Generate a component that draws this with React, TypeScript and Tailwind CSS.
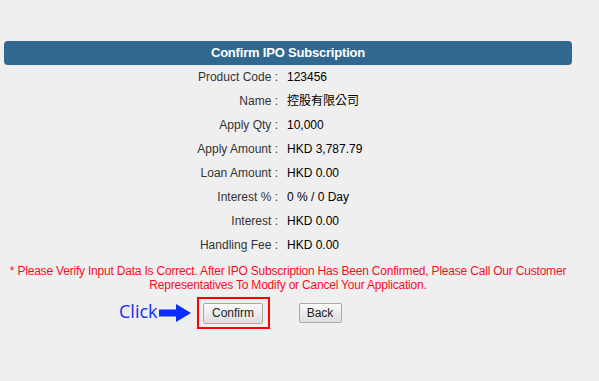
const rows: { label: string; value: string }[] = [
  { label: "Product Code", value: "123456" },
  { label: "Name", value: "控股有限公司" },
  { label: "Apply Qty", value: "10,000" },
  { label: "Apply Amount", value: "HKD 3,787.79" },
  { label: "Loan Amount", value: "HKD 0.00" },
  { label: "Interest %", value: "0 % / 0 Day" },
  { label: "Interest", value: "HKD 0.00" },
  { label: "Handling Fee", value: "HKD 0.00" },
];

function Arrow() {
  return (
    <svg width="32" height="18" viewBox="0 0 32 18" className="block">
      <rect x="0" y="5.5" width="18" height="7" fill="#0a2eff" />
      <polygon points="17,0 32,9 17,18" fill="#0a2eff" />
    </svg>
  );
}

export default function App() {
  return (
    <div className="w-[599px] h-[381px] bg-[#efefef] font-['Liberation_Sans',Arial,sans-serif] overflow-hidden">
      <div className="pt-[41px] pl-[4px] w-[572px]">
        <div className="h-[24px] bg-[#31688f] rounded-[4px] flex items-center justify-center text-white font-bold text-[13px] tracking-[-0.2px]">
          Confirm IPO Subscription
        </div>

        <div className="flex flex-col">
          {rows.map((r) => (
            <div key={r.label} className="h-[24px] flex items-center text-[12px]">
              <div className="w-[274px] text-right text-[#333]">
                {r.label} :
              </div>
              <div className="pl-[9px] text-black font-['Liberation_Sans','Noto_Sans_CJK_TC',sans-serif]">
                {r.value}
              </div>
            </div>
          ))}
        </div>

        <div className="mt-[7px] text-center text-[12px] leading-[14px] text-[#ff0a1e] whitespace-nowrap tracking-[-0.2px]">
          * Please Verify Input Data Is Correct. After IPO Subscription Has Been Confirmed, Please Call Our Customer
          <br />
          Representatives To Modify or Cancel Your Application.
        </div>

        <div className="mt-[5px] flex items-center pl-[115px]">
          <span className="text-[18px] text-[#0a2eff] font-['Open_Sans',sans-serif] leading-none -mt-[4px]">Click</span>
          <span className="ml-[1px]">
            <Arrow />
          </span>
          <div className="ml-[6px] w-[73px] h-[32px] border-2 border-[#ff0000] flex items-center justify-center">
            <button className="w-[60px] h-[21px] text-[12px] text-[#222] border border-[#a9a9a9] rounded-[2px] bg-gradient-to-b from-[#fafafa] to-[#dedede]">
              Confirm
            </button>
          </div>
          <button className="ml-[29px] w-[43px] h-[20px] text-[12px] text-[#222] border border-[#a9a9a9] rounded-[2px] bg-gradient-to-b from-[#fafafa] to-[#dedede]">
            Back
          </button>
        </div>
      </div>
    </div>
  );
}
